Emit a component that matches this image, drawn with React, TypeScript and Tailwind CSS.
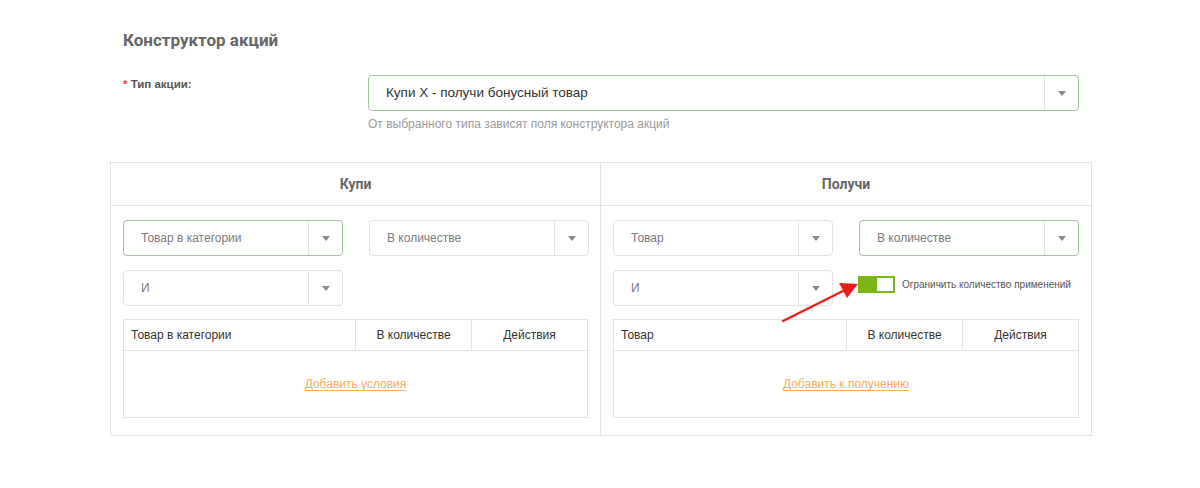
import React from 'react';

const Caret: React.FC = () => (
  <svg width="8" height="5" viewBox="0 0 8 5" className="block">
    <path d="M0 0 L8 0 L4 5 Z" fill="#8a8a8a" />
  </svg>
);

type SelectProps = { value: string; active?: boolean; placeholder?: boolean; className?: string };

const Select: React.FC<SelectProps> = ({ value, active, placeholder = true, className = '' }) => (
  <div
    className={`flex h-9 shrink-0 items-stretch rounded-[4px] border bg-white ${
      active ? 'border-[#9fc79b]' : 'border-[#e3e3e3]'
    } ${className}`}
  >
    <div
      className={`flex flex-1 items-center pl-[17px] ${
        placeholder ? 'text-[12px] text-[#7a7a7a]' : 'text-[13.5px] text-[#333]'
      }`}
    >
      {value}
    </div>
    <div className="flex w-[34px] items-center justify-center border-l border-[#e3e3e3]">
      <Caret />
    </div>
  </div>
);

const Table: React.FC<{ first: string; link: string }> = ({ first, link }) => (
  <div className="mt-[13px] border border-[#e3e3e3]">
    <div className="flex h-[31px] border-b border-[#e3e3e3] text-[12px] text-[#333]">
      <div className="flex flex-1 items-center pl-[7px]">{first}</div>
      <div className="flex w-[116px] items-center justify-center border-l border-[#e3e3e3]">В количестве</div>
      <div className="flex w-[116px] items-center justify-center border-l border-[#e3e3e3]">Действия</div>
    </div>
    <div className="flex h-[66px] items-center justify-center">
      <a className="text-[12px] text-[#f7ad5c] underline underline-offset-2">{link}</a>
    </div>
  </div>
);

const App: React.FC = () => {
  return (
    <div className="relative h-[488px] w-[1200px] bg-white font-['Liberation_Sans',Arial,sans-serif]">
      <div className="ml-[110px] w-[982px] pt-[30px]">
        <h1 className="pl-[13px] font-['Roboto',sans-serif] text-[17px] font-bold leading-5 text-[#666]">
          Конструктор акций
        </h1>

        <div className="mt-[25px] flex">
          <div className="w-[258px] pl-[13px] pt-[1px] text-[11.5px] font-bold text-[#555]">
            <span className="text-[#e4393c]">* </span>Тип акции:
          </div>
          <div className="w-[711px]">
            <Select value="Купи X - получи бонусный товар" active placeholder={false} />
            <div className="mt-[4px] text-[12px] leading-[18px] text-[#9a9a9a]">От выбранного типа зависят поля конструктора акций</div>
          </div>
        </div>

        <div className="mt-[29px] flex border-b border-l border-t border-[#e3e3e3]">
          <div className="w-[490px] border-r border-[#e3e3e3]">
            <div className="flex h-[43px] items-center justify-center border-b border-[#e3e3e3] font-['Roboto',sans-serif] text-[14px] font-bold text-[#666]">
              Купи
            </div>
            <div className="px-[12px] pb-[17px] pt-[14px]">
              <div className="flex gap-[26px]">
                <Select value="Товар в категории" active className="w-[220px]" />
                <Select value="В количестве" className="w-[220px]" />
              </div>
              <div className="mt-[14px] flex">
                <Select value="И" className="w-[220px]" />
              </div>
              <Table first="Товар в категории" link="Добавить условия" />
            </div>
          </div>
          <div className="w-[491px] border-r border-[#e3e3e3]">
            <div className="flex h-[43px] items-center justify-center border-b border-[#e3e3e3] font-['Roboto',sans-serif] text-[14px] font-bold text-[#666]">
              Получи
            </div>
            <div className="px-[12px] pb-[17px] pt-[14px]">
              <div className="flex gap-[26px]">
                <Select value="Товар" className="w-[220px]" />
                <Select value="В количестве" active className="w-[220px]" />
              </div>
              <div className="mt-[14px] flex items-start gap-[25px]">
                <Select value="И" className="w-[220px]" />
                <div className="mt-[6px] flex items-center gap-[7px]">
                  <div className="flex h-[17px] w-[37px] shrink-0 border-2 border-[#7cb518] bg-[#7cb518]">
                    <div className="flex-1" />
                    <div className="w-[16px] bg-white" />
                  </div>
                  <span className="whitespace-nowrap text-[10px] text-[#555]">Ограничить количество применений</span>
                </div>
              </div>
              <Table first="Товар" link="Добавить к получению" />
            </div>
          </div>
        </div>
      </div>

      <svg className="pointer-events-none absolute left-0 top-0" width="1200" height="488">
        <line x1="783" y1="321" x2="845" y2="290" stroke="#e8201b" strokeWidth="2.5" strokeLinecap="round" />
        <path d="M858 284 L839 283 L847 298 Z" fill="#e8201b" />
      </svg>
    </div>
  );
};

export default App;
